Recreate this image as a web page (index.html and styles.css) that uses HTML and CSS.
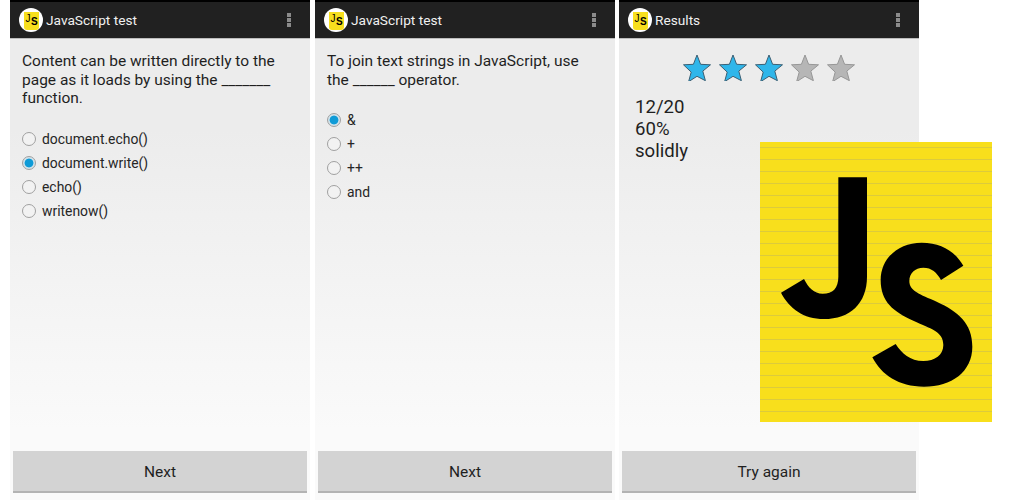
FILE: index.html
```html
<!DOCTYPE html>
<html lang="en">
<head>
<meta charset="utf-8">
<title>JavaScript test</title>
<link rel="stylesheet" href="styles.css">
</head>
<body>
<main class="screens">
  <section class="screen">
    <header class="bar">
      <div class="logo"><span class="logo-mark">J<span class="logo-s">S</span></span></div>
      <h1 class="title">JavaScript test</h1>
      <div class="menu"><i></i><i></i><i></i></div>
    </header>
    <div class="content">
      <p class="question">Content can be written directly to the page as it loads by using the _______ function.</p>
      <ul class="options">
        <li class="option"><span class="radio"></span>document.echo()</li>
        <li class="option"><span class="radio radio-on"></span>document.write()</li>
        <li class="option"><span class="radio"></span>echo()</li>
        <li class="option"><span class="radio"></span>writenow()</li>
      </ul>
    </div>
    <div class="action">Next</div>
  </section>
  <section class="screen">
    <header class="bar">
      <div class="logo"><span class="logo-mark">J<span class="logo-s">S</span></span></div>
      <h1 class="title">JavaScript test</h1>
      <div class="menu"><i></i><i></i><i></i></div>
    </header>
    <div class="content">
      <p class="question">To join text strings in JavaScript, use the ______ operator.</p>
      <ul class="options">
        <li class="option"><span class="radio radio-on"></span>&amp;</li>
        <li class="option"><span class="radio"></span>+</li>
        <li class="option"><span class="radio"></span>++</li>
        <li class="option"><span class="radio"></span>and</li>
      </ul>
    </div>
    <div class="action">Next</div>
  </section>
  <section class="screen screen-last">
    <header class="bar">
      <div class="logo"><span class="logo-mark">J<span class="logo-s">S</span></span></div>
      <h1 class="title">Results</h1>
      <div class="menu"><i></i><i></i><i></i></div>
    </header>
    <div class="content content-results">
      <div class="stars">
        <svg class="star star-on" viewBox="0 0 28 27"><path d="M14 1l3.6 9.300 9.900.5-7.700 6.300 2.600 9.600L14 22.300l-8.400 5.400 2.600-9.600L.5 10.800l9.900-.5z"/></svg>
        <svg class="star star-on" viewBox="0 0 28 27"><path d="M14 1l3.6 9.300 9.900.5-7.700 6.300 2.600 9.600L14 22.300l-8.400 5.400 2.600-9.600L.5 10.800l9.900-.5z"/></svg>
        <svg class="star star-on" viewBox="0 0 28 27"><path d="M14 1l3.6 9.300 9.900.5-7.700 6.300 2.600 9.600L14 22.300l-8.400 5.400 2.600-9.600L.5 10.800l9.900-.5z"/></svg>
        <svg class="star" viewBox="0 0 28 27"><path d="M14 1l3.6 9.300 9.900.5-7.700 6.300 2.600 9.600L14 22.300l-8.400 5.400 2.600-9.600L.5 10.800l9.900-.5z"/></svg>
        <svg class="star" viewBox="0 0 28 27"><path d="M14 1l3.6 9.300 9.900.5-7.700 6.300 2.600 9.600L14 22.300l-8.400 5.400 2.600-9.600L.5 10.800l9.900-.5z"/></svg>
      </div>
      <p class="score">12/20<br>60%<br>solidly</p>
    </div>
    <div class="action">Try again</div>
  </section>
</main>
<aside class="js-card">
  <svg class="js-art" viewBox="30 21 696 840" role="img" aria-label="JS logo">
    <path d="M265 127H351V425C351 505 300 552 222 552C160 552 118 520 93 473L162 432C175 458 192 476 218 476C248 476 265 460 265 425Z"/>
    <path d="M640 392C615 350 575 323 515 323C445 323 392 370 392 435C392 500 430 530 490 557C545 582 580 590 580 630C580 660 555 678 520 678C480 678 455 655 437 627L367 667C395 720 445 755 522 755C605 755 667 710 667 635C667 565 625 530 560 500C510 478 478 468 478 438C478 415 495 398 520 398C545 398 560 412 573 435Z"/>
  </svg>
</aside>
</body>
</html>
```

FILE: styles.css
```css
* { box-sizing: border-box; }
html, body { margin: 0; height: 500px; overflow: hidden; background: #fff; }
body { font-family: Roboto, "Liberation Sans", sans-serif; color: #1f1f1f; }
.screens { display: flex; gap: 5px; padding-left: 10px; height: 500px; }
.screen {
  width: 300px; height: 500px; display: flex; flex-direction: column;
  background: linear-gradient(#ececec 0, #ececec 130px, #fafafa 430px, #fafafa 100%);
}
.screen-last { margin-left: -1px; }
.bar {
  height: 39px; flex: none; display: flex; align-items: center; padding: 2px 19px 2px 9px;
  background: #212121; border-top: 2px solid #000; border-bottom: 1px solid #bdbdbd;
}
.logo {
  width: 24px; height: 24px; border-radius: 50%; background: #fff; flex: none;
  display: flex; align-items: center; justify-content: center; margin-right: 3px;
}
.logo-mark {
  width: 15px; height: 18px; background: #f7df1e; color: #000; display: block;
  margin-top: 1px; padding: 1px 0 0 2px;
  font: 400 10px/12px "Liberation Sans", sans-serif; letter-spacing: -.5px;
  border-radius: 0 0 3px 3px;
}
.logo-s { position: relative; top: 3px; left: 1px; font-weight: 700; }
.title { flex: 1; margin: 0; color: #f0f0f0; font-size: 13.7px; font-weight: 400; }
.menu { display: flex; flex-direction: column; gap: 1px; }
.menu i { display: block; width: 4px; height: 4px; background: #8b8b8b; }
.content { flex: 1; padding: 13px 12px 0; }
.question { margin: 0; font-size: 15.5px; line-height: 18.5px; width: 270px; }
.options { list-style: none; margin: 19px 0 0; padding: 0; }
.option { display: flex; align-items: center; height: 24px; font-size: 13.9px; color: #262626; }
.radio {
  width: 14px; height: 14px; border-radius: 50%; border: 1px solid #a0a0a0;
  background: #f2f2f2; margin: 0 6px 0 0; flex: none;
}
.radio-on {
  background: radial-gradient(circle, #0f9bd7 0, #0f9bd7 4px, #cfe3ec 4.800px, #e0e0e0 100%);
}
.content-results { padding: 0 0 0 16px; }
.stars { display: flex; justify-content: center; gap: 8px; margin: 15px 0 0 -16px; }
.star { width: 28px; height: 27px; display: block; }
.star path { fill: #b6b6b6; stroke: #979797; stroke-width: 1; }
.star-on path { fill: #2fb6ea; stroke: #3c5f73; }
.score { margin: 15px 0 0; font-size: 18.6px; line-height: 22px; }
.action {
  flex: none; height: 42px; margin: 0 3px 7px; padding-top: 2px; display: flex; align-items: center; justify-content: center;
  background: #d3d3d3; border-bottom: 2px solid #b3b3b3; font-size: 15.5px; color: #1f1f1f;
}
.js-card {
  position: absolute; left: 760px; top: 142px; width: 232px; height: 280px;
  background: repeating-linear-gradient(#f8df1c 0, #f8df1c 5px, #dccb3c 5px, #dccb3c 6px, #f8df1c 6px, #f8df1c 12px);
}
.js-art { display: block; width: 232px; height: 280px; }
```
